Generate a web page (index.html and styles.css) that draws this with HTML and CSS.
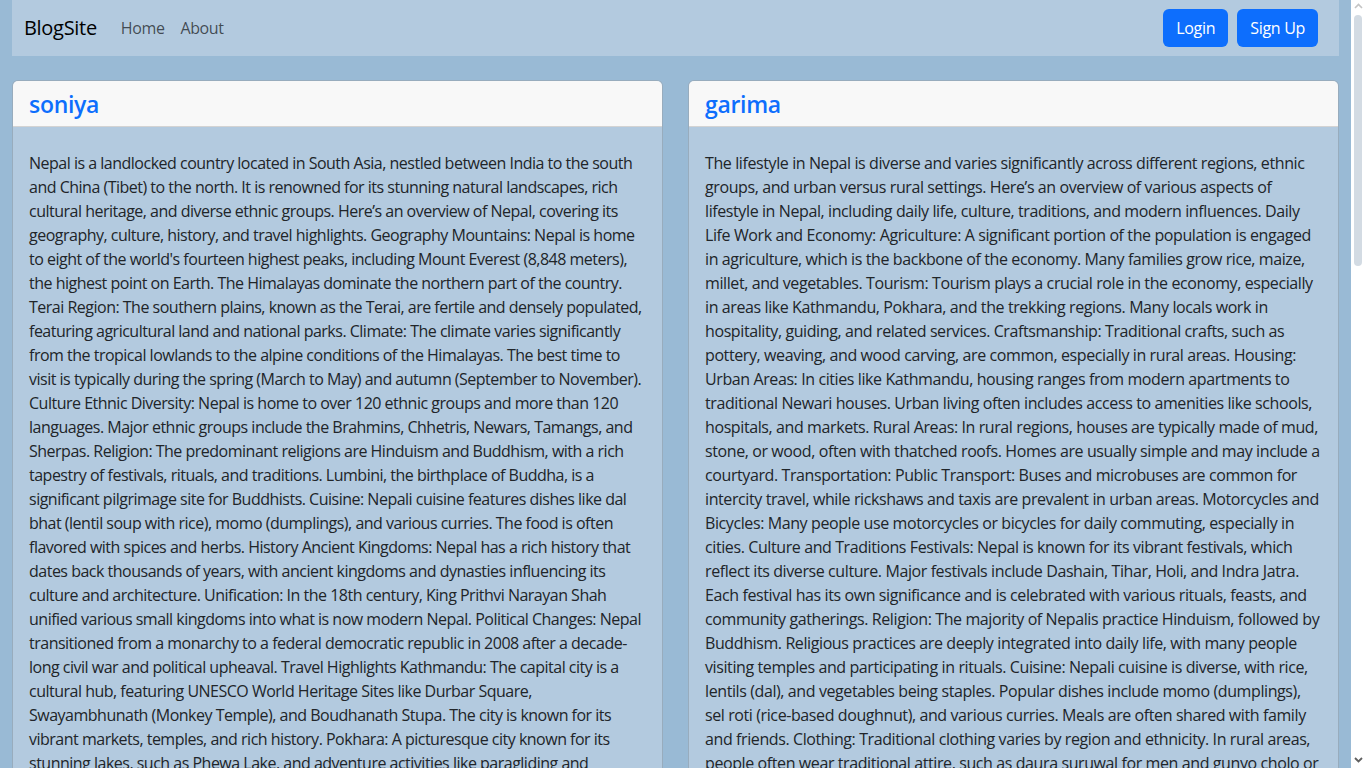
FILE: index.html
```html
<!DOCTYPE html>
<html lang="en">
<head>
<meta charset="utf-8">
<title>BlogSite</title>
<link rel="stylesheet" href="styles.css">
</head>
<body>
<div class="page">
  <nav class="navbar">
    <div class="nav-left">
      <a class="brand" href="#">BlogSite</a>
      <a class="nav-link" href="#">Home</a>
      <a class="nav-link" href="#">About</a>
    </div>
    <div class="nav-right">
      <a class="btn" href="#">Login</a>
      <a class="btn" href="#">Sign Up</a>
    </div>
  </nav>
  <div class="grid">
    <div class="card">
      <div class="card-header"><h3 class="card-title">soniya</h3></div>
      <div class="card-body">
        <p class="post-text">Nepal is a landlocked country located in South Asia, nestled between India to the south and China (Tibet) to the north. It is renowned for its stunning natural landscapes, rich cultural heritage, and diverse ethnic groups. Here’s an overview of Nepal, covering its geography, culture, history, and travel highlights. Geography Mountains: Nepal is home to eight of the world's fourteen highest peaks, including Mount Everest (8,848 meters), the highest point on Earth. The Himalayas dominate the northern part of the country. Terai Region: The southern plains, known as the Terai, are fertile and densely populated, featuring agricultural land and national parks. Climate: The climate varies significantly from the tropical lowlands to the alpine conditions of the Himalayas. The best time to visit is typically during the spring (March to May) and autumn (September to November). Culture Ethnic Diversity: Nepal is home to over 120 ethnic groups and more than 120 languages. Major ethnic groups include the Brahmins, Chhetris, Newars, Tamangs, and Sherpas. Religion: The predominant religions are Hinduism and Buddhism, with a rich tapestry of festivals, rituals, and traditions. Lumbini, the birthplace of Buddha, is a significant pilgrimage site for Buddhists. Cuisine: Nepali cuisine features dishes like dal bhat (lentil soup with rice), momo (dumplings), and various curries. The food is often flavored with spices and herbs. History Ancient Kingdoms: Nepal has a rich history that dates back thousands of years, with ancient kingdoms and dynasties influencing its culture and architecture. Unification: In the 18th century, King Prithvi Narayan Shah unified various small kingdoms into what is now modern Nepal. Political Changes: Nepal transitioned from a monarchy to a federal democratic republic in 2008 after a decade-long civil war and political upheaval. Travel Highlights Kathmandu: The capital city is a cultural hub, featuring UNESCO World Heritage Sites like Durbar Square, Swayambhunath (Monkey Temple), and Boudhanath Stupa. The city is known for its vibrant markets, temples, and rich history. Pokhara: A picturesque city known for its stunning lakes, such as Phewa Lake, and adventure activities like paragliding and trekking.</p>
      </div>
    </div>
    <div class="card">
      <div class="card-header"><h3 class="card-title">garima</h3></div>
      <div class="card-body">
        <p class="post-text post-text-alt">The lifestyle in Nepal is diverse and varies significantly across different regions, ethnic groups, and urban versus rural settings. Here’s an overview of various aspects of lifestyle in Nepal, including daily life, culture, traditions, and modern influences. Daily Life Work and Economy: Agriculture: A significant portion of the population is engaged in agriculture, which is the backbone of the economy. Many families grow rice, maize, millet, and vegetables. Tourism: Tourism plays a crucial role in the economy, especially in areas like Kathmandu, Pokhara, and the trekking regions. Many locals work in hospitality, guiding, and related services. Craftsmanship: Traditional crafts, such as pottery, weaving, and wood carving, are common, especially in rural areas. Housing: Urban Areas: In cities like Kathmandu, housing ranges from modern apartments to traditional Newari houses. Urban living often includes access to amenities like schools, hospitals, and markets. Rural Areas: In rural regions, houses are typically made of mud, stone, or wood, often with thatched roofs. Homes are usually simple and may include a courtyard. Transportation: Public Transport: Buses and microbuses are common for intercity travel, while rickshaws and taxis are prevalent in urban areas. Motorcycles and Bicycles: Many people use motorcycles or bicycles for daily commuting, especially in cities. Culture and Traditions Festivals: Nepal is known for its vibrant festivals, which reflect its diverse culture. Major festivals include Dashain, Tihar, Holi, and Indra Jatra. Each festival has its own significance and is celebrated with various rituals, feasts, and community gatherings. Religion: The majority of Nepalis practice Hinduism, followed by Buddhism. Religious practices are deeply integrated into daily life, with many people visiting temples and participating in rituals. Cuisine: Nepali cuisine is diverse, with rice, lentils (dal), and vegetables being staples. Popular dishes include momo (dumplings), sel roti (rice-based doughnut), and various curries. Meals are often shared with family and friends. Clothing: Traditional clothing varies by region and ethnicity. In rural areas, people often wear traditional attire, such as daura suruwal for men and gunyo cholo or sari for women.</p>
      </div>
    </div>
  </div>
</div>
<div class="scrollbar" aria-hidden="true">
  <svg class="sb-up" width="15" height="12" viewBox="0 0 15 12"><path d="M4 8 L7.5 4.5 L11 8" fill="none" stroke="#c4c4c4" stroke-width="1.6"/></svg>
  <div class="sb-thumb"></div>
  <svg class="sb-down" width="15" height="12" viewBox="0 0 15 12"><path d="M4 4 L7.5 7.5 L11 4" fill="none" stroke="#606060" stroke-width="1.8"/></svg>
</div>
</body>
</html>
```

FILE: styles.css
```css
* { box-sizing: border-box; }
body {
  margin: 0;
  background: #99bad5;
  font-family: "Open Sans", "Noto Sans", sans-serif;
  font-size: 16px;
  line-height: 24px;
  color: #212529;
}
.page {
  padding: 0 12px;
  margin-right: 15px;
}
.navbar {
  display: flex;
  justify-content: space-between;
  align-items: center;
  height: 56px;
  padding: 0 21px 0 12px;
  background: #b3cadf;
}
.nav-left { display: flex; align-items: center; }
.brand {
  font-size: 20px;
  color: #000;
  text-decoration: none;
  margin-right: 16px;
  letter-spacing: -0.3px;
}
.nav-link {
  color: rgba(0,0,0,0.65);
  text-decoration: none;
  padding: 8px;
  letter-spacing: -0.4px;
}
.nav-right { display: flex; gap: 9px; }
.btn {
  display: inline-flex;
  align-items: center;
  height: 38px;
  background: #0d6efd;
  color: #fff;
  text-decoration: none;
  padding: 0 13px;
  border-radius: 6px;
  letter-spacing: -0.3px;
}
.grid {
  display: grid;
  grid-template-columns: 1fr 1fr;
  column-gap: 25px;
  margin-top: 24px;
}
.card {
  background: #b3cadf;
  border: 1px solid rgba(0,0,0,0.15);
  border-radius: 6px;
  overflow: hidden;
}
.card-header {
  background: #f8f8f8;
  border-bottom: 1px solid rgba(0,0,0,0.15);
  padding: 8px 16px;
  height: 46px;
}
.card-title {
  margin: 0;
  font-size: 23px;
  line-height: 30px;
  font-weight: 600;
  color: #0d6efd;
  letter-spacing: -0.3px;
}
.card-body {
  padding: 24px 16px 16px;
}
.post-text {
  margin: 0;
  letter-spacing: -0.5px;
}
.post-text-alt {
  letter-spacing: -0.4px;
}
.scrollbar {
  position: fixed;
  top: 0;
  right: 0;
  width: 15px;
  height: 100vh;
  background: #ffffff;
}
.sb-up { position: absolute; top: 0; left: 0; }
.sb-down { position: absolute; bottom: 2px; left: 0; }
.sb-thumb {
  position: absolute;
  top: 15px;
  left: 3px;
  width: 8px;
  height: 251px;
  border-radius: 4px;
  background: #d3dbe3;
}
```
